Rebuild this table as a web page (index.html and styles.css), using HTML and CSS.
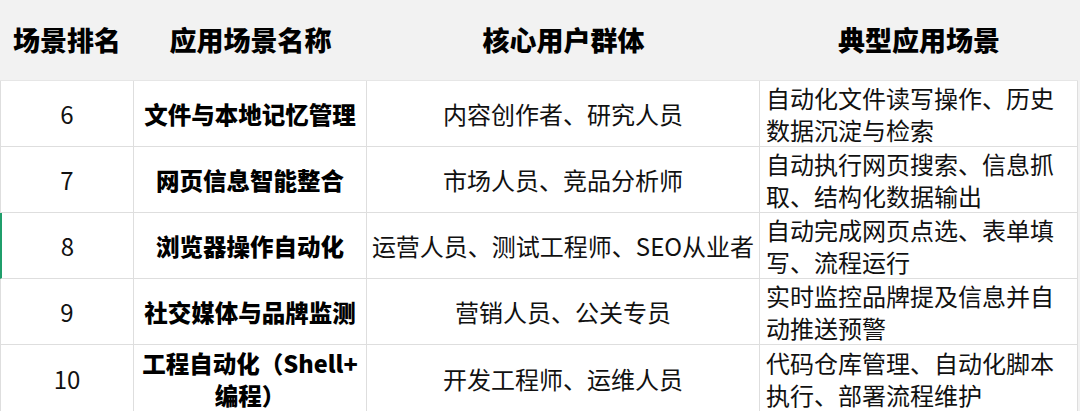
FILE: index.html
```html
<!DOCTYPE html>
<html lang="zh-CN">
<head>
<meta charset="utf-8">
<title>应用场景</title>
<link rel="stylesheet" href="styles.css">
</head>
<body>
<div class="table">
  <div class="cell head">场景排名</div>
  <div class="cell head">应用场景名称</div>
  <div class="cell head">核心用户群体</div>
  <div class="cell head">典型应用场景</div>

  <div class="cell num">6</div>
  <div class="cell name">文件与本地记忆管理</div>
  <div class="cell users">内容创作者、研究人员</div>
  <div class="cell desc">自动化文件读写操作、历史数据沉淀与检索</div>

  <div class="cell num">7</div>
  <div class="cell name">网页信息智能整合</div>
  <div class="cell users">市场人员、竞品分析师</div>
  <div class="cell desc">自动执行网页搜索、信息抓取、结构化数据输出</div>

  <div class="cell num selected">8</div>
  <div class="cell name">浏览器操作自动化</div>
  <div class="cell users">运营人员、测试工程师、SEO从业者</div>
  <div class="cell desc">自动完成网页点选、表单填写、流程运行</div>

  <div class="cell num">9</div>
  <div class="cell name">社交媒体与品牌监测</div>
  <div class="cell users">营销人员、公关专员</div>
  <div class="cell desc">实时监控品牌提及信息并自动推送预警</div>

  <div class="cell num last">10</div>
  <div class="cell name last">工程自动化（Shell+<br>编程）</div>
  <div class="cell users last">开发工程师、运维人员</div>
  <div class="cell desc last">代码仓库管理、自动化脚本执行、部署流程维护</div>
</div>
</body>
</html>
```

FILE: styles.css
```css
html, body {
  margin: 0;
  padding: 0;
}
body {
  background: #f2f2f2;
  width: 1080px;
  height: 411px;
  overflow: hidden;
  font-family: "Noto Sans CJK SC", "Noto Sans", sans-serif;
  color: #111;
}
.table {
  display: grid;
  grid-template-columns: 134px 233px 393px 318px;
  grid-template-rows: 81px 66px 66px 66px 66px 67px;
  width: 1078px;
}
.cell {
  box-sizing: border-box;
  display: flex;
  align-items: center;
  justify-content: center;
  text-align: center;
  font-size: 24px;
  line-height: 32px;
  background: #fff;
  border-right: 1px solid #dedede;
  border-bottom: 1px solid #dedede;
}
.head {
  background: #f2f2f2;
  border-right: none;
  border-bottom: 1px solid #e6e6e6;
  font-weight: 900;
  font-size: 27px;
  color: #000;
  padding-bottom: 1px;
}
.num {
  border-left: 1px solid #dedede;
}
.num.selected {
  border-left: 2px solid #1f9e6b;
}
.name {
  font-weight: 900;
  font-size: 23.5px;
  color: #000;
}
.users {
  white-space: nowrap;
  padding: 0 4px;
}
.desc {
  justify-content: flex-start;
  text-align: left;
  padding: 0 6px;
}
.last {
  border-bottom: none;
}
```
